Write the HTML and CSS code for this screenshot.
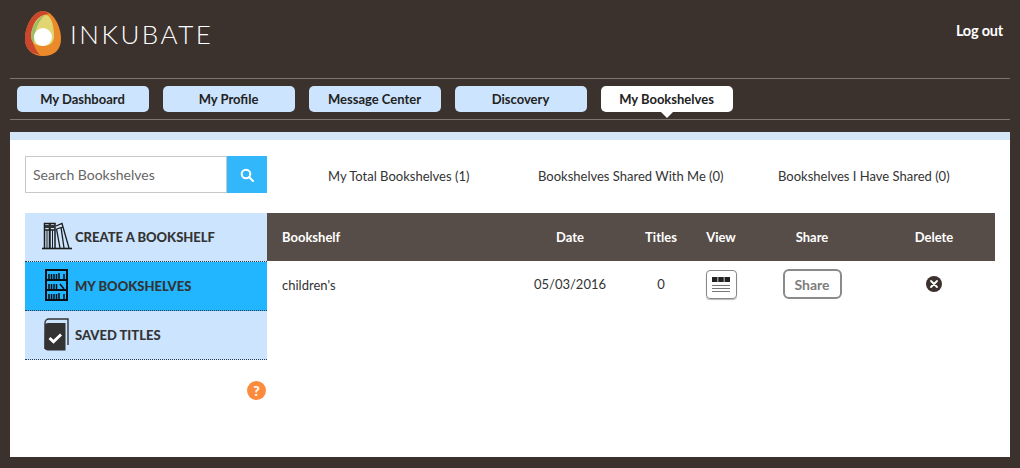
FILE: index.html
```html
<!DOCTYPE html>
<html lang="en">
<head>
<meta charset="utf-8">
<title>Inkubate</title>
<link rel="stylesheet" href="styles.css">
</head>
<body>
<header class="top">
  <div class="brand">
    <svg class="logo" width="36" height="45" viewBox="0 0 36 45">
      <path d="M18 0C8 0 0 15 0 28c0 10 7 17 18 17s18-6 18-17C36 15 28 0 18 0z" fill="#ea8a2a"/>
      <path d="M18 0C8 0 0 15 0 28c0 6 2 10 6 13 2 1 5 2 9 3C7 36 5 22 9 13 11 9 16 3 24 3c-2-2-4-3-6-3z" fill="#c9472d"/>
      <path d="M21 4C13 4 7 14 6 24c0 7 4 11 11 11 8 0 12-3 12-10C29 15 26 4 21 4z" fill="#e2d672"/>
      <path d="M20 4C13 6 7 15 6 24c0 4 1 6 3 8 0-9 3-21 11-28z" fill="#9dbb68"/>
      <circle cx="18" cy="26" r="9" fill="#fff"/>
    </svg>
    <span class="wordmark">INKUBATE</span>
  </div>
  <a class="logout">Log out</a>
</header>
<nav class="nav">
  <a class="tab">My Dashboard</a>
  <a class="tab">My Profile</a>
  <a class="tab">Message Center</a>
  <a class="tab">Discovery</a>
  <a class="tab tab-active">My Bookshelves</a>
</nav>
<main class="panel">
  <div class="toolbar">
    <div class="search">
      <div class="search-input">Search Bookshelves</div>
      <div class="search-btn">
        <svg width="14" height="14" viewBox="0 0 14 14" fill="none" stroke="#fff" stroke-width="2"><circle cx="6" cy="6" r="4.300"/><path d="M9.200 9.200L13 13" stroke-linecap="round"/></svg>
      </div>
    </div>
    <div class="counts">
      <span class="count c1">My Total Bookshelves (1)</span>
      <span class="count c2">Bookshelves Shared With Me (0)</span>
      <span class="count c3">Bookshelves I Have Shared (0)</span>
    </div>
  </div>
  <div class="body">
    <aside class="side">
      <div class="menu">
        <a class="item">
          <svg class="ic ic-create" width="32" height="28" viewBox="0 0 32 28" fill="none" stroke="#1c1c1c" stroke-width="1.300">
            <path d="M1 26.500h30" stroke-width="1.600"/>
            <path d="M3.500 26V1.500h5V26M9 26V1.500h5V26M3.500 8h5M9 8h5" stroke-width="1.500"/>
            <path d="M4 4.500h10" stroke-width="3" stroke="#333"/>
            <path d="M6 8v18M11.500 8v18" stroke-width="1"/>
            <path d="M15 4l6-2.500L28 26M15.500 7l6.500-2M19 26L15.500 7M23 26L20 5" stroke-width="1.300"/>
          </svg>
          <span>CREATE A BOOKSHELF</span>
        </a>
        <a class="item item-on">
          <svg class="ic ic-shelf" width="23" height="32" viewBox="0 0 23 32">
            <path d="M0 0h23v32H0z" fill="#0b0f14"/>
            <path d="M2 2h19v8H2zM2 12h19v8H2zM2 22h19v8H2z" fill="#21b6ff"/>
            <g stroke="#0b0f14" stroke-width="1.500">
              <path d="M4 10V5M6.500 10V5M9 10V5M11.500 10V5M14 10V4M19 10V5"/>
              <path d="M4 20v-5M6.500 20v-5M9 20v-5M11.500 20v-5M15 15l4 5"/>
              <path d="M4 30v-5M6.500 30v-5M9 30v-5M11.500 30v-5M14 30v-6M19 30v-5"/>
            </g>
          </svg>
          <span>MY BOOKSHELVES</span>
        </a>
        <a class="item">
          <svg class="ic ic-saved" width="25" height="33" viewBox="0 0 25 33">
            <path d="M1 31V5c0-2 1.500-4 4-4h19v26" fill="none" stroke="#333" stroke-width="1.400"/>
            <path d="M1 7c0-1 1-2 3-2h17.500v27.500H4c-2 0-3.500-1-3.500-3z" fill="#333"/>
            <path d="M4.500 21l2-2 3 2.800 6.500-6.300 2 2-8.500 8.200z" fill="#fff"/>
          </svg>
          <span>SAVED TITLES</span>
        </a>
      </div>
      <div class="help">?</div>
    </aside>
    <section class="table">
      <div class="row row-head">
        <div class="c-left">Bookshelf</div>
        <div>Date</div>
        <div>Titles</div>
        <div>View</div>
        <div>Share</div>
        <div>Delete</div>
      </div>
      <div class="row row-data">
        <div class="c-left">children's</div>
        <div>05/03/2016</div>
        <div>0</div>
        <div>
          <span class="view-btn">
            <svg width="18" height="15" viewBox="0 0 18 15"><path d="M0 0h5.500v5H0zM6.250 0h5.500v5h-5.500zM12.500 0H18v5h-5.500z" fill="#222"/><path d="M0 8.500h18M0 11.500h18M0 14.500h18" stroke="#777" stroke-width="1"/></svg>
          </span>
        </div>
        <div><span class="share-btn">Share</span></div>
        <div>
          <svg class="del" width="16" height="16" viewBox="0 0 16 16"><circle cx="8" cy="8" r="8" fill="#3b312d"/><path d="M5 5l6 6M11 5l-6 6" stroke="#fff" stroke-width="1.800" stroke-linecap="round"/></svg>
        </div>
      </div>
    </section>
  </div>
</main>
</body>
</html>
```
FILE: styles.css
```css
* { box-sizing: border-box; }
html, body { margin: 0; padding: 0; }
body {
  width: 1020px;
  height: 468px;
  overflow: hidden;
  background: #3b312d;
  font-family: Lato, "Liberation Sans", sans-serif;
  font-size: 14px;
  color: #333;
  padding: 0 10px;
}
.top {
  height: 79px;
  border-bottom: 1px solid #7e7470;
  display: flex;
  justify-content: space-between;
  padding: 11px 7px 0 15px;
}
.brand { display: flex; align-items: flex-start; }
.logo { display: block; }
.wordmark {
  margin: 7px 0 0 9px;
  font-size: 26px;
  line-height: 32px;
  font-weight: 300;
  letter-spacing: 2.500px;
  color: #fff;
}
.logout {
  margin-top: 11px;
  line-height: 17px;
  font-weight: 700;
  font-size: 14.500px;
  color: #fff;
  letter-spacing: -.2px;
}
.nav {
  height: 41px;
  border-bottom: 1px solid #7e7470;
  display: flex;
  gap: 14px;
  padding: 7px 2px 0 7px;
}
.tab {
  position: relative;
  width: 132px;
  height: 26px;
  padding-right: 1px;
  line-height: 26px;
  text-align: center;
  background: #cce4fd;
  border-radius: 5px;
  color: #222;
  font-weight: 700;
  font-size: 13px;
}
.tab-active { background: #fff; }
.tab-active::after {
  content: "";
  position: absolute;
  left: 60px;
  top: 26px;
  border: 6px solid transparent;
  border-top-color: #fff;
  border-bottom: 0;
}
.panel {
  margin-top: 12px;
  height: 325px;
  background: #fff;
  border-top: 8px solid #d4e5f8;
  padding: 16px 15px 0;
}
.toolbar { display: flex; height: 37px; }
.search { display: flex; width: 242px; }
.search-input {
  width: 202px;
  border: 1px solid #c8c8c8;
  padding-left: 7px;
  line-height: 35px;
  color: #666;
  font-size: 14px;
}
.search-btn {
  width: 40px;
  background: #33b7fb;
  display: flex;
  align-items: center;
  justify-content: center;
}
.counts {
  flex: 1;
  display: flex;
  align-items: center;
  padding: 2px 0 0 61px;
  font-size: 13px;
  color: #333;
}
.count { white-space: nowrap; }
.c1 { width: 210px; }
.c2 { width: 240px; }
.body { display: flex; margin-top: 20px; }
.side { width: 242px; }
.menu { display: flex; flex-direction: column; }
.item {
  height: 49px;
  background: #cce4fd;
  border-bottom: 1px dotted #2b3a4a;
  display: flex;
  align-items: center;
  font-weight: 900;
  font-size: 13px;
  color: #333;
  position: relative;
  padding-left: 50px;
}
.item-on { background: #21b6ff; }
.ic { position: absolute; }
.ic-create { left: 16px; top: 9px; }
.ic-shelf { left: 20px; top: 7px; }
.ic-saved { left: 19px; top: 7px; }
.help {
  width: 19px;
  height: 19px;
  margin: 21px 0 0 222px;
  border-radius: 50%;
  background: #fd8b3c;
  color: #fff;
  font-weight: 900;
  font-size: 14px;
  line-height: 19px;
  text-align: center;
}
.table { width: 728px; }
.row {
  display: grid;
  grid-template-columns: 242px 122px 60px 60px 122px 122px;
  align-items: center;
  text-align: center;
}
.c-left { text-align: left; padding-left: 15px; }
.row-head {
  height: 48px;
  background: #574d48;
  color: #fff;
  font-weight: 700;
  font-size: 13px;
}
.row-data { height: 46px; font-size: 13px; color: #333; }
.row-data > div { display: flex; justify-content: center; align-items: center; }
.row-data > .c-left { justify-content: flex-start; padding-top: 2px; }
.view-btn {
  width: 31px;
  height: 29px;
  border: 1.500px solid #888;
  border-radius: 4px;
  display: flex;
  align-items: center;
  justify-content: center;
  box-shadow: 0 1px 1px #bbb;
}
.share-btn {
  width: 59px;
  height: 30px;
  border: 2px solid #8a8a8a;
  border-radius: 6px;
  line-height: 27px;
  text-align: center;
  font-weight: 700;
  font-size: 14px;
  color: #7d7d7d;
}
.del { display: block; }
```
